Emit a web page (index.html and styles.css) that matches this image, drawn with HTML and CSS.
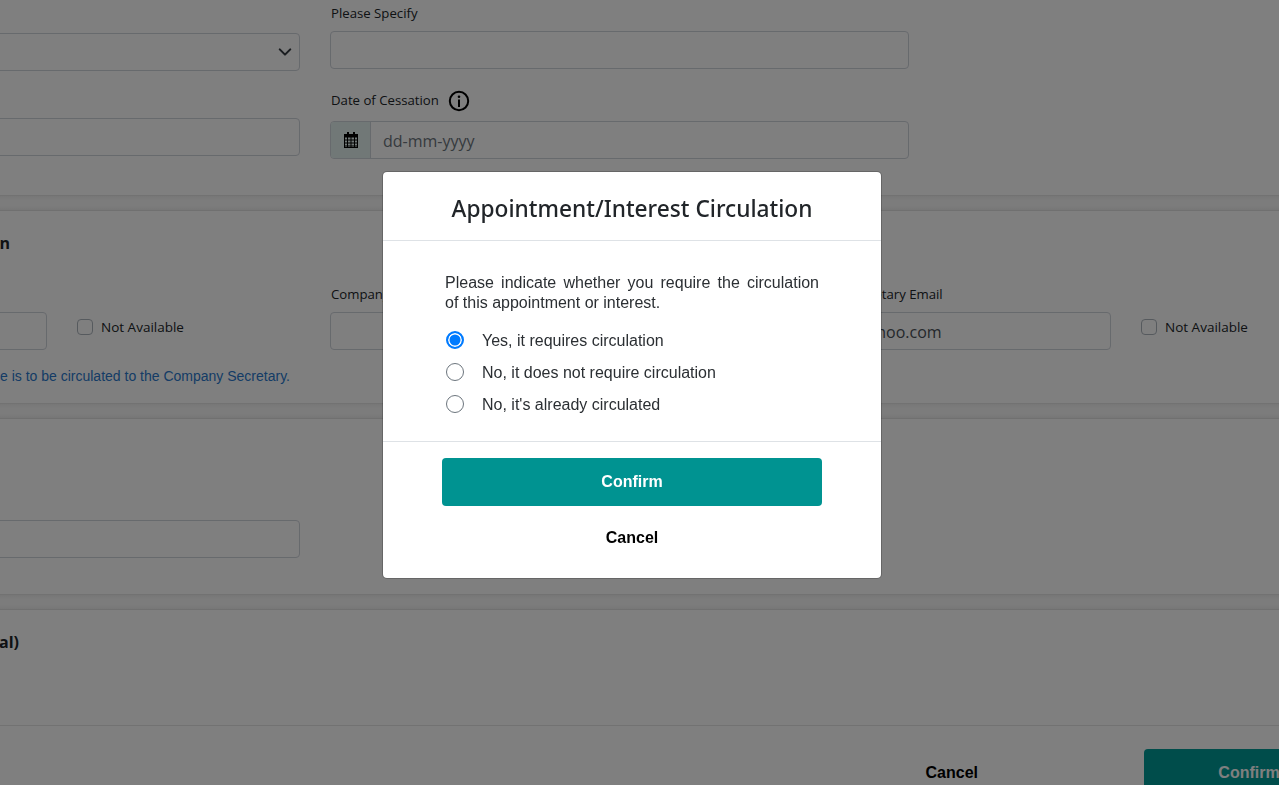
FILE: index.html
```html
<!doctype html>
<html>
<head>
<meta charset="utf-8">
<title>Appointment/Interest Circulation</title>
<link rel="stylesheet" href="styles.css">
</head>

<body>
<div class="page">
	<div class="section sectionA">
		<div class="col colLeft">
			<div class="selectBox">
				<svg class="chevron" width="14" height="14" viewBox="0 0 16 16"><path d="M2 5l6 6 6-6" fill="none" stroke="#343a40" stroke-width="2.400" stroke-linecap="round" stroke-linejoin="round"/></svg>
			</div>
			<input class="field fieldLower" type="text">
		</div>
		<div class="col colRight">
			<label class="lab">Please Specify</label>
			<input class="field" type="text">
			<label class="lab labDate">Date of Cessation
				<svg class="info" width="22" height="22" viewBox="0 0 22 22"><circle cx="11" cy="11" r="9.200" fill="none" stroke="#000" stroke-width="2"/><circle cx="11" cy="6.800" r="1.300"/><path d="M10 9.500h2v7.500h-2z"/></svg>
			</label>
			<div class="dateBox">
				<span class="dateIcon">
					<svg width="14" height="16" viewBox="0 0 14 16"><path d="M3 0h2v2h4V0h2v2h3v14H0V2h3z"/><path d="M1 5h12v10H1z" fill="#e2f0ee"/><path d="M1 5h12M1 8h12M1 11h12M1 14h12M3.500 5v10M7 5v10M10.500 5v10" stroke="#000" stroke-width="1" fill="none"/></svg>
				</span>
				<span class="datePlace">dd-mm-yyyy</span>
			</div>
		</div>
	</div>
	<div class="band"></div>

	<div class="section sectionB">
		<h4 class="head headB">Company Secretary Information</h4>
		<div class="contacts">
			<div class="contact">
				<label class="lab">Company Secretary Name</label>
				<div class="contactRow">
					<input class="field" type="text">
					<label class="na"><span class="box"></span>Not Available</label>
				</div>
			</div>
			<div class="contact">
				<label class="lab">Company</label>
				<div class="contactRow">
					<input class="field" type="text">
				</div>
			</div>
			<div class="contact">
				<label class="lab">Company Secretary Email</label>
				<div class="contactRow">
					<input class="field fieldMail" type="text" value="jsmith@yahoo.com">
					<label class="na"><span class="box"></span>Not Available</label>
				</div>
			</div>
		</div>
		<p class="note">An email notice is to be circulated to the Company Secretary.</p>
	</div>
	<div class="band"></div>

	<div class="section sectionC">
		<div class="col colLeft">
			<input class="field" type="text">
		</div>
	</div>
	<div class="band"></div>

	<div class="section sectionD">
		<h4 class="head headD">Attachments (Optional)</h4>
	</div>

	<div class="foot">
		<button class="btnCancel">Cancel</button>
		<button class="btnConfirm">Confirm</button>
	</div>
</div>

<div class="overlay">
	<div class="modal">
		<div class="modalHead"><h2>Appointment/Interest Circulation</h2></div>
		<div class="modalBody">
			<p>Please indicate whether you require the circulation of this appointment or interest.</p>
			<ul class="radios">
				<li><span class="radio on"></span><span class="radioText">Yes, it requires circulation</span></li>
				<li><span class="radio"></span><span class="radioText">No, it does not require circulation</span></li>
				<li><span class="radio"></span><span class="radioText">No, it's already circulated</span></li>
			</ul>
		</div>
		<div class="modalFoot">
			<button class="modalConfirm">Confirm</button>
			<button class="modalCancel">Cancel</button>
		</div>
	</div>
</div>
</body>
</html>
```

FILE: styles.css
```css
*{ margin:0; padding:0; box-sizing:border-box}
ul{ list-style:none}
html,body{ height:100%; overflow:hidden; background:#fff}
body{ font-family:"Open Sans","Noto Sans","Liberation Sans",sans-serif; color:#212529}

/* page is scrolled sideways, its left part is out of view */
.page{ width:1633px; margin-left:-279px}

.section{ border-bottom:1px solid #e4e4e4}
.band{ height:15px; background:linear-gradient(#eeeeee,#f8f8f8 4px,#f8f8f8 10px,#eeeeee); border-bottom:1px solid #e0e0e0}

.sectionA{ height:196px; display:grid; grid-template-columns:579px 579px; column-gap:30px}
.col{ display:flex; flex-direction:column}
.colLeft{ padding-top:33px}
.colRight{ padding-top:4px}

.lab{ display:block; height:18px; line-height:18px; padding-left:1px; font-size:13.200px; color:#212529; white-space:nowrap}
.field{ display:block; width:100%; height:38px; border:1px solid #ced4da; border-radius:4px; background:#fff; font-family:inherit; font-size:16px; color:#495057; padding:0 12px}
.colRight .lab{ margin-bottom:9px}
.colRight .labDate{ display:flex; align-items:center; margin:22px 0 12px}
.info{ margin:2px 0 0 9px; flex:none}
.fieldLower{ margin-top:47px}

.selectBox{ height:38px; border:1px solid #ced4da; border-radius:4px; display:flex; align-items:center; justify-content:flex-end; padding-right:7px}

.dateBox{ display:flex; height:38px; border:1px solid #ced4da; border-radius:4px; overflow:hidden}
.dateIcon{ width:40px; background:#e2f0ee; border-right:1px solid #ced4da; display:flex; align-items:center; justify-content:center}
.datePlace{ flex:1; line-height:38px; padding-left:12px; font-size:16px; color:#6c757d}

.sectionB{ height:193px; padding-top:21px}
.head{ font-size:16px; line-height:22px; font-weight:700; color:#212529; white-space:nowrap; text-align:right}
.headB{ width:289px}
.contacts{ display:grid; grid-template-columns:609px 455px 455px; margin-top:31px}
.contacts .lab{ overflow:hidden}
.contactRow{ display:flex; align-items:flex-start; margin-top:9px}
.contactRow .field{ width:326px; flex:none}
.fieldMail{ padding:2px 0 0 13px}
.na{ display:flex; align-items:center; height:30px; margin-left:30px; font-size:13.500px; white-space:nowrap}
.box{ width:16px; height:16px; border:1px solid #adb5bd; border-radius:4px; margin-right:8px; background:#fff}
.note{ width:569px; margin-top:17px; text-align:right; font-family:"Liberation Sans",Arial,sans-serif; font-size:14px; line-height:18px; color:#2a78cc; white-space:nowrap}

.sectionC{ height:176px; padding-top:101px}
.sectionC .colLeft{ padding-top:0; width:579px}

.sectionD{ height:116px; padding-top:21px}
.headD{ width:298px}

.foot{ display:flex; justify-content:flex-end; align-items:flex-start; padding-top:23px}
.btnCancel,.btnConfirm,.modalConfirm,.modalCancel{ border:0; font-family:"Liberation Sans",Arial,sans-serif; font-weight:700; font-size:16px; cursor:pointer}
.btnCancel{ background:none; color:#000; height:48px; margin-right:166px}
.btnConfirm{ width:210px; height:48px; background:#009a96; color:#fff; border-radius:4px}

.overlay{ position:fixed; top:0; left:0; right:0; bottom:0; background:rgba(0,0,0,.5)}
.modal{ width:500px; height:408px; margin:171px 0 0 382px; background:#fff; border:1px solid rgba(0,0,0,.2); border-radius:5px; display:flex; flex-direction:column; background-clip:padding-box}
.modalHead{ height:69px; padding-top:5px; border-bottom:1px solid #dee2e6; display:flex; align-items:center; justify-content:center}
.modalHead h2{ font-family:"Noto Sans","Open Sans",sans-serif; font-size:22.700px; font-weight:500; line-height:36px; color:#212529}
.modalBody{ height:201px; border-bottom:1px solid #dee2e6; padding:32px 62px 0}
.modalBody p{ font-family:"Liberation Sans",Arial,sans-serif; font-size:16px; line-height:20px; text-align:justify; color:#2b2f33}
.radios{ margin-top:12px}
.radios li{ display:flex; align-items:center; height:32px; font-family:"Liberation Sans",Arial,sans-serif; font-size:16px; color:#2b2f33}
.radio{ width:18px; height:18px; border:1px solid #6c757d; border-radius:50%; margin:0 18px 2px 1px; background:#fff; flex:none}
.radio.on{ border:2px solid #007bff; box-shadow:inset 0 0 0 1.500px #fff; background:#007bff}
.modalFoot{ display:flex; flex-direction:column; align-items:center; padding-top:16px}
.modalConfirm{ width:380px; height:48px; background:#009391; color:#fff; border-radius:4px}
.modalCancel{ background:none; color:#000; height:20px; margin-top:22px}
```
